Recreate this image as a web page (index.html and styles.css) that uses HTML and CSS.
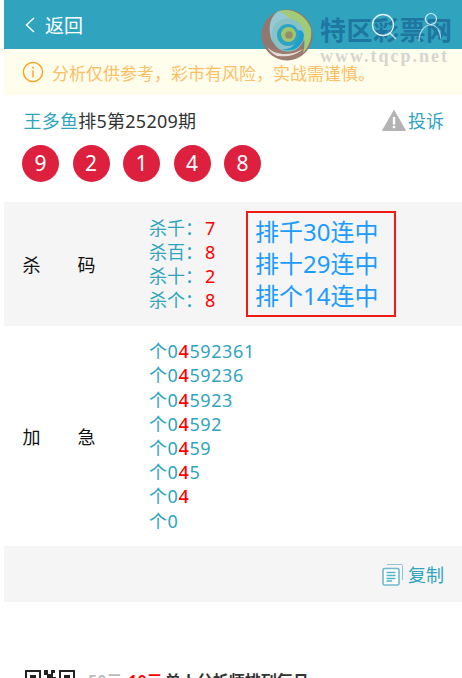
FILE: index.html
```html
<!DOCTYPE html>
<html lang="en">
<head>
    <meta charset="UTF-8">
    <meta name="viewport" content="width=device-width, initial-scale=1.0">
    <title>返回</title>
    <link rel="stylesheet" href="styles.css">
</head>
<body>
    <div class="page">
        <!-- Top bar -->
        <header class="top-bar">
            <svg class="back-icon" width="12" height="18" viewBox="0 0 12 18"><path d="M10 2 L2.5 9 L10 16" fill="none" stroke="#fff" stroke-width="1.4"/></svg>
            <span class="back-text">返回</span>
        </header>

        <!-- Risk notice -->
        <div class="notice">
            <svg class="notice-icon" width="22" height="22" viewBox="0 0 22 22">
                <circle cx="11" cy="11" r="9.6" fill="none" stroke="#ff9f1a" stroke-width="1.4"/>
                <rect x="10.3" y="9.5" width="1.4" height="7" fill="#ff9f1a"/>
                <rect x="10.2" y="5.8" width="1.6" height="1.8" fill="#ff9f1a"/>
            </svg>
            <span>分析仅供参考，彩市有风险，实战需谨慎。</span>
        </div>

        <!-- Title -->
        <div class="title-row">
            <div class="title"><span class="author">王多鱼</span>排5第25209期</div>
            <div class="report">
                <svg width="24" height="21" viewBox="0 0 24 21"><path d="M12 0.5 L23.5 20.5 L0.5 20.5 Z" fill="#b3b3b3" stroke="#b3b3b3" stroke-linejoin="round"/><rect x="10.8" y="7" width="2.4" height="7.5" fill="#fff"/><rect x="10.8" y="15.8" width="2.4" height="2.4" fill="#fff"/></svg>
                <span>投诉</span>
            </div>
        </div>

        <div class="balls">
            <span class="ball">9</span>
            <span class="ball">2</span>
            <span class="ball">1</span>
            <span class="ball">4</span>
            <span class="ball">8</span>
        </div>

        <!-- Kill codes -->
        <section class="row row-grey row-kill">
            <div class="row-label"><span>杀</span><span>码</span></div>
            <ul class="kill-list">
                <li>杀千：<b>7</b></li>
                <li>杀百：<b>8</b></li>
                <li>杀十：<b>2</b></li>
                <li>杀个：<b>8</b></li>
            </ul>
            <div class="streak">
                <p>排千30连中</p>
                <p>排十29连中</p>
                <p>排个14连中</p>
            </div>
        </section>

        <!-- Add -->
        <section class="row row-add">
            <div class="row-label"><span>加</span><span>急</span></div>
            <ul class="add-list">
                <li>个0<b>4</b>592361</li>
                <li>个0<b>4</b>59236</li>
                <li>个0<b>4</b>5923</li>
                <li>个0<b>4</b>592</li>
                <li>个0<b>4</b>59</li>
                <li>个0<b>4</b>5</li>
                <li>个0<b>4</b></li>
                <li>个0</li>
            </ul>
        </section>

        <div class="copy-row">
            <svg width="22" height="23" viewBox="0 0 22 23">
                <path d="M5 1.5 H19.5 a1 1 0 0 1 1 1 V17" fill="none" stroke="#8cc6d6" stroke-width="1"/>
                <rect x="1" y="5.5" width="16" height="16.5" rx="1.5" fill="#fff" stroke="#6fb9cd" stroke-width="1.6"/>
                <path d="M4.5 9.5 H13.5 M4.5 12.5 H13.5 M4.5 15.5 H13.5 M4.5 18 H10" stroke="#4fb3cc" stroke-width="1.3"/>
            </svg>
            <span>复制</span>
        </div>

        <!-- Promo -->
        <div class="promo">
            <svg class="qr" width="50" height="50" viewBox="0 0 50 50" shape-rendering="crispEdges">
                <path d="M0 0 H16 V16 H0 Z M2 2 V14 H14 V2 Z M5 5 H11 V11 H5 Z M34 0 H50 V16 H34 Z M36 2 V14 H48 V2 Z M39 5 H45 V11 H39 Z" fill="#222" fill-rule="evenodd"/>
                <path d="M19 0 H23 V4 H26 V0 H30 V3 H28 V7 H31 V12 H27 V9 H23 V13 H19 V9 H22 V5 H19 Z" fill="#222"/>
            </svg>
            <div class="promo-text"><span class="old-price">50元</span><span class="new-price">10元</span>单人分析师排列每月</div>
        </div>

        <!-- Watermark over the header -->
        <div class="watermark">
            <svg class="wm-logo" width="52" height="52" viewBox="0 0 52 52">
                <circle cx="26" cy="26" r="25.5" fill="#97756a"/>
                <path d="M18 2 C30 -2 46 6 50 20 C51 30 48 38 42 44 C46 30 42 14 26 9 C22 8 20 5 18 2 Z" fill="#a8cf72"/>
                <path d="M18 2 C8 7 6 22 12 34 C9 20 18 10 32 12 C26 7 22 4 18 2 Z" fill="#9ccbd8"/>
                <circle cx="27" cy="26" r="16.5" fill="#8cc4c8"/>
                <path d="M43 26 A16 16 0 0 1 20 40 C32 42 38 32 36 22 C40 20 42 22 43 26 Z" fill="#1f9fcd"/>
                <circle cx="27" cy="26" r="11" fill="#2ca6c6"/>
                <circle cx="27.5" cy="25.5" r="7.5" fill="#a9c76a"/>
                <circle cx="28" cy="26" r="3.8" fill="#9c8f62"/>
                <path d="M6 38 C16 48 32 46 42 40 C34 47 26 48 16 47 C12 45 8 42 6 38 Z" fill="#fff" opacity="0.75"/>
            </svg>
            <div class="wm-words">
                <div class="wm-name">特区彩票网</div>
                <div class="wm-url">www.tqcp.net</div>
            </div>
            <svg class="wm-icons" width="72" height="42" viewBox="0 0 72 42">
                <circle cx="14" cy="14" r="10.5" fill="none" stroke="#fff" stroke-width="1.3" opacity="0.85"/>
                <path d="M21 22 L27 28" stroke="#fff" stroke-width="1.5" opacity="0.7"/>
                <circle cx="62" cy="8" r="5.5" fill="none" stroke="#fff" stroke-width="1.2" opacity="0.8"/>
                <path d="M50 30 C50 21 55 14 62 14 C68 14 71 20 72 28" fill="none" stroke="#fff" stroke-width="1.2" opacity="0.6"/>
            </svg>
        </div>
    </div>
</body>
</html>
```

FILE: styles.css
```css
html, body {
    margin: 0;
    padding: 0;
    height: 678px;
    overflow: hidden;
    background-color: #fff;
}

body {
    font-family: "Noto Sans", "Noto Sans CJK SC", sans-serif;
    font-size: 18px;
    color: #333;
}

.page {
    position: relative;
    height: 678px;
    margin-left: 4px;
    overflow: hidden;
}

ul {
    list-style: none;
    margin: 0;
    padding: 0;
}

p {
    margin: 0;
}

b {
    font-weight: normal;
}

.top-bar {
    display: flex;
    align-items: center;
    height: 49px;
    padding-left: 20px;
    background-color: #30a4bf;
    color: #fff;
}

.back-text {
    margin-left: 9px;
    font-size: 19px;
}

.notice {
    display: flex;
    align-items: center;
    height: 46px;
    padding-left: 18px;
    background-color: #fffdec;
    color: #fbbf66;
    font-size: 17px;
}

.notice-icon {
    margin-right: 8px;
}

.title-row {
    display: flex;
    justify-content: space-between;
    align-items: center;
    height: 50px;
    padding: 0 18px 0 19.5px;
}

.title {
    font-size: 18px;
    letter-spacing: 0.25px;
    color: #333;
}

.author {
    color: #30a4bf;
}

.report {
    display: flex;
    align-items: center;
    gap: 2px;
    color: #30a4bf;
}

.balls {
    display: flex;
    gap: 13.5px;
    padding-left: 18px;
    height: 57px;
}

.ball {
    width: 37px;
    height: 37px;
    border-radius: 50%;
    background-color: #dc203e;
    color: #fff;
    font-size: 21px;
    line-height: 37px;
    text-align: center;
}

.row {
    display: flex;
    align-items: center;
}

.row-grey {
    background-color: #f5f5f5;
}

.row-kill {
    height: 124px;
}

.row-add {
    height: 220px;
}

.row-label {
    display: flex;
    justify-content: space-between;
    flex: none;
    width: 73px;
    margin-left: 18.5px;
    margin-right: 53.5px;
    color: #111;
}

.kill-list {
    width: 97px;
    line-height: 24px;
    color: #30a4bf;
}

.kill-list b {
    margin-left: 2px;
    color: #f00;
}

.streak {
    width: 150px;
    padding: 3px 0 3px 7px;
    box-sizing: border-box;
    border: 2px solid #f01c14;
    font-size: 24px;
    line-height: 32px;
    color: #1e9bff;
}

.add-list {
    line-height: 24.2px;
    letter-spacing: 0.6px;
    color: #30a4bf;
}

.add-list b {
    color: #f00;
    font-weight: 500;
}

.copy-row {
    display: flex;
    justify-content: flex-end;
    align-items: center;
    gap: 4px;
    height: 56px;
    padding-right: 18px;
    background-color: #f5f5f5;
    color: #30a4bf;
    font-size: 18px;
}

.promo {
    display: flex;
    gap: 13px;
    margin-top: 68px;
    padding-left: 21px;
}

.promo-text {
    margin-top: -2px;
    color: #333;
    font-size: 16px;
    font-weight: 600;
    white-space: nowrap;
}

.old-price {
    color: #bbb;
    margin-right: 6px;
}

.new-price {
    color: #f00;
    margin-right: 2px;
}

/* watermark sits on top of the page */
.watermark {
    position: absolute;
    top: 9px;
    left: 257px;
    width: 205px;
    height: 54px;
    display: flex;
}

.wm-logo {
    flex: none;
    opacity: 0.95;
}

.wm-words {
    margin-left: 7px;
    padding-top: 5px;
}

.wm-name {
    font-size: 26px;
    line-height: 32px;
    font-weight: 700;
    letter-spacing: 0.5px;
    color: #1c6f9c;
    opacity: 0.85;
    white-space: nowrap;
}

.wm-url {
    font-family: "Liberation Serif", serif;
    font-size: 18px;
    line-height: 20px;
    font-weight: 700;
    letter-spacing: 2px;
    color: #bbb;
    opacity: 0.6;
    white-space: nowrap;
}

.wm-icons {
    position: absolute;
    top: 2px;
    left: 108px;
}
```
